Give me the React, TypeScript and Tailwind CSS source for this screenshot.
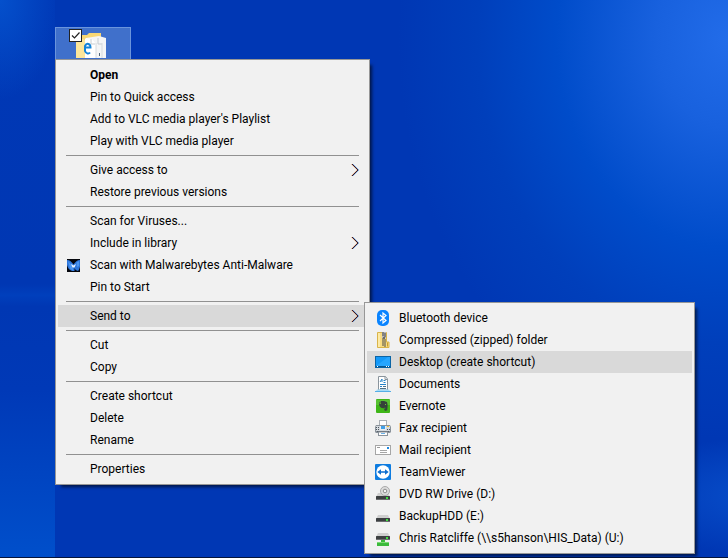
import type { ReactNode } from "react";

type Entry = {
  label: string;
  icon?: ReactNode;
  bold?: boolean;
  active?: boolean;
  submenu?: boolean;
};

function Chevron() {
  return (
    <svg width="8" height="14" viewBox="0 0 8 14" fill="none" aria-hidden="true">
      <path d="M0 1l6 6-6 6" stroke="#e0a878" strokeWidth="0.6" />
      <path d="M2 1l6 6-6 6" stroke="#4a90d9" strokeWidth="0.6" />
      <path d="M1 1l6 6-6 6" stroke="#3a1a2a" />
    </svg>
  );
}

function MalwarebytesIcon() {
  return (
    <svg width="14" height="13" viewBox="0 0 14 13" aria-hidden="true">
      <rect width="13" height="13" fill="#05070d" />
      <path d="M0 1c3 0 4.500 2 6.500 4.500C8.500 3 10 1 13 1v6.500c-.5 2-1 3.500-2 4.500-1.800-.5-3-1.500-3.500-3v3H5C2 11 .8 9 0 6z" fill="#2d76dc" />
      <path d="M1 2l4 4.500L6.500 12 3 9.500z" fill="#4c97f2" />
      <path d="M9.500 3.500L12 2v5l-2 1z" fill="#4c97f2" />
      <path d="M4 5l2.500 1.500L9 5 7.500 8.500h-2z" fill="#e8f3ff" />
    </svg>
  );
}

function BluetoothIcon() {
  return (
    <svg width="16" height="16" viewBox="0 0 16 16" fill="none" aria-hidden="true">
      <rect x="2" width="12" height="16" rx="5" fill="#0a84ff" />
      <path d="M5 5l6 5.500L8 13V3l3 2.500L5 11" stroke="#fff" strokeWidth="1.200" />
    </svg>
  );
}

function ZipIcon() {
  return (
    <svg width="16" height="16" viewBox="0 0 16 16" aria-hidden="true">
      <path d="M2.500 .5h9V10H14v5.500H2.500z" fill="#f9dc80" stroke="#d9b44a" />
      <path d="M3 1h2v14H3z" fill="#fdeaa5" />
      <path d="M12.500 10.500v4" stroke="#c99c2e" />
      <rect x="7" width="4" height="6" fill="#b9b9b9" />
      <path d="M7 1h2M9 2h2M7 3h2M9 4h2M7 7h2M9 8h2M7 9h2M9 10h2M7 11h2M9 12h2M7 13h2M9 14h2" stroke="#4d4d4d" />
      <rect x="8" y="5" width="2" height="2" fill="#6a6a6a" />
    </svg>
  );
}

function DesktopIcon() {
  return (
    <svg width="16" height="16" viewBox="0 0 16 16" aria-hidden="true">
      <rect x=".5" y="2.500" width="15" height="11" fill="#1499f8" stroke="#0b64a5" />
      <path d="M1 12L13 3h2v9z" fill="#27a6ff" />
      <path d="M1 12.500h14" stroke="#0a568f" />
      <path d="M2 12.500h1M11 12.500h1M13 12.500h1" stroke="#fff" />
    </svg>
  );
}

function DocumentsIcon() {
  return (
    <svg width="16" height="16" viewBox="0 0 16 16" fill="none" aria-hidden="true">
      <path d="M3.500 14V.5h7l2 2.500v11z" fill="#fff" stroke="#8a949c" />
      <path d="M10 .5v3h3" stroke="#8a949c" />
      <path d="M5 6l2-3v3M8.500 4.500h2M8.500 6.500h2M5 8.500h6M5 10.500h2" stroke="#2583c9" />
      <path d="M8 10.500h3M5 12.500h6" stroke="#4f6f88" />
      <path d="M2 13.500h12l1.500 2.500H.5z" fill="#a5dbf8" />
      <path d="M0 15.500h16" stroke="#55aee6" />
    </svg>
  );
}

function EvernoteIcon() {
  return (
    <svg width="16" height="16" viewBox="0 0 16 16" aria-hidden="true">
      <rect x="1" y="1" width="14" height="14" rx="1" fill="#3fb618" />
      <path d="M1 2h14v5H1z" fill="#58c232" />
      <path d="M6 3h3l3 1c.8 2.500.8 5 .2 8-.5 1-3 1-3-.6 0-1 .8-1.400 1.600-1.200-.6-.7-1.300-.5-1.800 0C6.500 10.500 4.500 9.500 4 6h2z" fill="#35423a" />
      <path d="M5.500 3v2.500H3.800z" fill="#35423a" />
      <path d="M10 6.500h1" stroke="#62c93a" />
    </svg>
  );
}

function FaxIcon() {
  return (
    <svg width="16" height="16" viewBox="0 0 16 16" aria-hidden="true">
      <rect x="4.500" y=".5" width="7" height="6" fill="#fff" stroke="#aab0b6" />
      <path d="M1 5h14l1 2v5l-1 1H1l-1-1V7z" fill="#8b939b" />
      <path d="M1 6h14v5H1z" fill="#d4d9de" />
      <path d="M1 7.500h3M1 9.500h3M12 9.500h3" stroke="#4b545d" strokeDasharray="1 1" />
      <rect x="5" y="6" width="6" height="4" fill="#e9eef2" />
      <rect x="6" y="6" width="4" height="3" fill="#41a0e8" />
      <path d="M12 6.500h2" stroke="#f2c230" />
      <path d="M2 11.500h12" stroke="#59616a" />
      <rect x="3.500" y="12" width="9" height="3.500" fill="#fff" stroke="#8b939b" />
      <path d="M6 13.500h4" stroke="#6db3ea" />
    </svg>
  );
}

function MailIcon() {
  return (
    <svg width="16" height="16" viewBox="0 0 16 16" aria-hidden="true">
      <rect x=".5" y="3.500" width="15" height="9" fill="#fff" stroke="#a6a6a6" />
      <path d="M2 5.500h3" stroke="#9a9a9a" />
      <path d="M5 8.500h7M5 10.500h7" stroke="#a6a6a6" />
      <rect x="12" y="5" width="2" height="2" fill="#1d87df" />
    </svg>
  );
}

function TeamViewerIcon() {
  return (
    <svg width="16" height="16" viewBox="0 0 16 16" aria-hidden="true">
      <rect width="16" height="16" rx="1" fill="#0e7ce0" />
      <circle cx="8" cy="8" r="6.700" fill="#fff" />
      <path d="M2.300 8L6 5.200v2h4v-2L13.700 8 10 10.800v-2H6v2z" fill="#0e6fd0" />
    </svg>
  );
}

function Drive({ y }: { y: number }) {
  return (
    <g>
      <path d={`M3 ${y}h10l2 4H1z`} fill="#cfcfcf" />
      <rect x="1" y={y + 3} width="14" height="4" rx="0.5" fill="#3c3f41" />
      <path d={`M1 ${y + 6.5}h14`} stroke="#6b6d6f" />
      <rect x="11" y={y + 4} width="2" height="2" fill="#3fe03f" />
    </g>
  );
}

function DvdIcon() {
  return (
    <svg width="16" height="16" viewBox="0 0 16 16" aria-hidden="true">
      <Drive y={7} />
      <circle cx="10" cy="5" r="4.500" fill="#dcdcdc" stroke="#a9a9a9" />
      <circle cx="10" cy="5" r="1.800" fill="#f4f4f4" stroke="#8e8e8e" />
    </svg>
  );
}

function HddIcon() {
  return (
    <svg width="16" height="16" viewBox="0 0 16 16" aria-hidden="true">
      <Drive y={7} />
    </svg>
  );
}

function NetworkDriveIcon() {
  return (
    <svg width="16" height="16" viewBox="0 0 16 16" aria-hidden="true">
      <Drive y={3} />
      <path d="M6 10h4v2h4v4H2v-4h4z" fill="#3cba3c" />
      <path d="M2 12.500h12" stroke="#7bdc74" />
    </svg>
  );
}

function FolderIcon() {
  return (
    <svg width="32" height="25" viewBox="0 0 32 25" aria-hidden="true">
      <path d="M0 2h11l2-2h12v25H0z" fill="#f8d775" />
      <path d="M0 3l9 4v18H0z" fill="#fde69a" />
      <path d="M10 5l13-2 7 2v20H10z" fill="#f4f5f6" />
      <path d="M10 5l6 1 4 5v14H9V6z" fill="#fff" />
      <path d="M15 6v5h4M22 5v6h4" fill="none" stroke="#c6ccd1" />
      <path d="M20 10v15M26 10v15" stroke="#d5dade" />
      <path d="M9.500 14.500h5c0-4-4-5-5.500-1.500v5c1 3 4 3 5 1.500" fill="none" stroke="#1583d8" strokeWidth="2" />
      <path d="M23.500 20v3" stroke="#52677d" />
    </svg>
  );
}

const groups: Entry[][] = [
  [
    { label: "Open", bold: true },
    { label: "Pin to Quick access" },
    { label: "Add to VLC media player's Playlist" },
    { label: "Play with VLC media player" },
  ],
  [{ label: "Give access to", submenu: true }, { label: "Restore previous versions" }],
  [
    { label: "Scan for Viruses..." },
    { label: "Include in library", submenu: true },
    { label: "Scan with Malwarebytes Anti-Malware", icon: <MalwarebytesIcon /> },
    { label: "Pin to Start" },
  ],
  [{ label: "Send to", submenu: true, active: true }],
  [{ label: "Cut" }, { label: "Copy" }],
  [{ label: "Create shortcut" }, { label: "Delete" }, { label: "Rename" }],
  [{ label: "Properties" }],
];

const sendTo: Entry[] = [
  { label: "Bluetooth device", icon: <BluetoothIcon /> },
  { label: "Compressed (zipped) folder", icon: <ZipIcon /> },
  { label: "Desktop (create shortcut)", icon: <DesktopIcon />, active: true },
  { label: "Documents", icon: <DocumentsIcon /> },
  { label: "Evernote", icon: <EvernoteIcon /> },
  { label: "Fax recipient", icon: <FaxIcon /> },
  { label: "Mail recipient", icon: <MailIcon /> },
  { label: "TeamViewer", icon: <TeamViewerIcon /> },
  { label: "DVD RW Drive (D:)", icon: <DvdIcon /> },
  { label: "BackupHDD (E:)", icon: <HddIcon /> },
  { label: "Chris Ratcliffe (\\\\s5hanson\\HIS_Data) (U:)", icon: <NetworkDriveIcon /> },
];

function MenuItem({ entry }: { entry: Entry }) {
  return (
    <button
      type="button"
      role="menuitem"
      aria-haspopup={entry.submenu ? "menu" : undefined}
      className={`flex h-[22px] w-full items-center pr-2 text-left whitespace-nowrap ${entry.active ? "bg-[#d9d9d9]" : ""} ${entry.bold ? "font-bold" : ""}`}
    >
      <span className="flex w-8 shrink-0 justify-center">{entry.icon}</span>
      <span className="flex-1">{entry.label}</span>
      {entry.submenu && <Chevron />}
    </button>
  );
}

function Menu({ label, className, children }: { label: string; className: string; children: ReactNode }) {
  return (
    <div
      role="menu"
      aria-label={label}
      className={`border border-[#979797] bg-[#f1f1f1] px-0.5 py-1 shadow-[4px_4px_3px_-2px_rgba(0,0,0,0.6)] ${className}`}
    >
      {children}
    </div>
  );
}

export default function App() {
  return (
    <main className="flex min-h-screen flex-col overflow-hidden border-b border-[#04143c] bg-[#0037b4] bg-[radial-gradient(ellipse_150px_60px_at_106%_89%,#0850cc_0%,#0037b400_100%),radial-gradient(ellipse_330px_400px_at_100%_7%,#226ce9_0%,#1861de_22%,#004cca_52%,#003fbb_76%,#0037b400_100%)] font-[Roboto,'Open_Sans',sans-serif] text-xs text-black">
      <div className="flex flex-1">
        <div className="w-[55px] shrink-0 bg-[radial-gradient(ellipse_60px_100px_at_0%_0%,#0450cc_0%,#0037b400_100%),linear-gradient(180deg,#0038b6_0%,#0037b3_51%,#003fbc_53%,#0037b3_55%,#0039b7_70%,#004fcb_100%)]" />
        <div className="min-w-0 flex-1 pt-[27px]">
          <div className="flex h-8 w-[76px] items-start border border-b-0 border-[#6a94dc] bg-[#4070cb] pt-px pl-[13px]">
            <label className="relative z-10 -mr-1.5 flex size-[13px]">
              <input
                type="checkbox"
                defaultChecked
                aria-label="Select folder"
                className="peer size-full appearance-none border border-[#222] bg-white"
              />
              <svg viewBox="0 0 13 13" className="pointer-events-none absolute inset-0 hidden peer-checked:block" fill="none" aria-hidden="true">
                <path d="M3 6.500l2.500 2.500L10.500 3.500" stroke="#222" strokeWidth="1.200" />
              </svg>
            </label>
            <div className="pt-1">
              <FolderIcon />
            </div>
          </div>
          <Menu label="Folder" className="w-[315px]">
            {groups.map((group, i) => (
              <div key={i}>
                {i > 0 && <hr className="mx-2 my-[3px] border-t border-[#919191]" />}
                {group.map(entry => (
                  <div key={entry.label} className="relative">
                    <MenuItem entry={entry} />
                    {entry.label === "Send to" && (
                      <Menu label="Send to" className="absolute -top-[3px] left-full z-10 -ml-[3px] w-[331px]">
                        {sendTo.map(target => (
                          <MenuItem key={target.label} entry={target} />
                        ))}
                      </Menu>
                    )}
                  </div>
                ))}
              </div>
            ))}
          </Menu>
        </div>
      </div>
    </main>
  );
}
